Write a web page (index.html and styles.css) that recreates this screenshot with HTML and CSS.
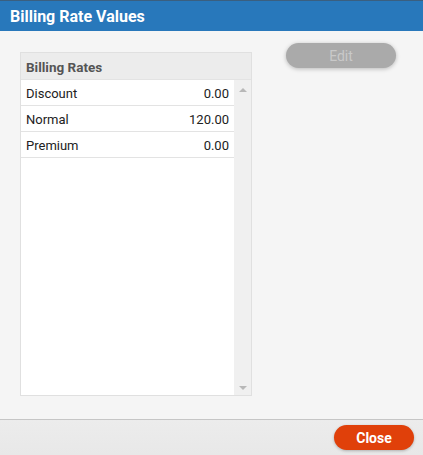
FILE: index.html
```html
<!DOCTYPE html>
<html>
<head>
<meta charset="utf-8">
<link rel="stylesheet" href="styles.css">
</head>
<body>
<div class="dialog">
  <div class="titlebar">Billing Rate Values</div>
  <div class="content">
    <div class="grid">
      <div class="grid-head">Billing Rates</div>
      <div class="grid-body">
        <div class="rows">
          <div class="row"><span>Discount</span><span>0.00</span></div>
          <div class="row"><span>Normal</span><span>120.00</span></div>
          <div class="row"><span>Premium</span><span>0.00</span></div>
        </div>
        <div class="scrollbar">
          <span class="arrow up"></span>
          <span class="arrow down"></span>
        </div>
      </div>
    </div>
    <div class="actions">
      <button class="btn-edit" disabled>Edit</button>
    </div>
  </div>
  <div class="footer">
    <button class="btn-close">Close</button>
  </div>
</div>
</body>
</html>
```
FILE: styles.css
```css
* { box-sizing: border-box; }
html, body { margin: 0; padding: 0; }
body {
  width: 423px;
  height: 455px;
  background: #f5f5f5;
  font-family: Roboto, "Liberation Sans", sans-serif;
  overflow: hidden;
}
.dialog {
  display: flex;
  flex-direction: column;
  height: 455px;
}
.titlebar {
  height: 31px;
  background: #2878bb;
  border-top: 1px solid #3a5f80;
  color: #fff;
  font-weight: 700;
  font-size: 16px;
  padding: 6px 0 0 10px;
}
.content {
  flex: 1;
  display: flex;
  padding: 21px 0 0 20px;
}
.grid {
  width: 232px;
  height: 344px;
  border: 1px solid #e0e0e0;
  display: flex;
  flex-direction: column;
  background: #fff;
}
.grid-head {
  height: 27px;
  background: #ececec;
  border-bottom: 1px solid #e3e3e3;
  color: #555;
  font-weight: 700;
  font-size: 13.5px;
  padding: 6px 0 0 5px;
}
.grid-body {
  flex: 1;
  display: flex;
}
.rows {
  flex: 1;
}
.row {
  height: 26px;
  border-bottom: 1px solid #e3e3e3;
  display: flex;
  justify-content: space-between;
  align-items: center;
  padding: 1px 5px 0 5px;
  font-size: 13px;
  color: #222;
}
.scrollbar {
  width: 17px;
  background: #f0f0f0;
  display: flex;
  flex-direction: column;
  justify-content: space-between;
  align-items: center;
  padding: 8px 0 5px 0;
}
.arrow {
  width: 0;
  height: 0;
  border-left: 4px solid transparent;
  border-right: 4px solid transparent;
}
.arrow.up { border-bottom: 4px solid #b8b8b8; }
.arrow.down { border-top: 4px solid #b8b8b8; }
.actions {
  padding: 0 0 0 34px;
  margin-top: -9px;
}
.btn-edit {
  width: 110px;
  height: 25px;
  border: none;
  border-radius: 13px;
  background: #aaaaaa;
  color: #c9c9c9;
  font-family: Roboto, "Liberation Sans", sans-serif;
  font-size: 14px;
  box-shadow: 0 1px 4px rgba(0,0,0,0.25);
}
.footer {
  height: 36px;
  border-top: 1px solid #c6c6c6;
  background: linear-gradient(#ececec, #e8e8e8);
  display: flex;
  justify-content: flex-end;
  align-items: flex-start;
  padding: 5px 9px 0 0;
}
.btn-close {
  width: 80px;
  height: 25px;
  border: none;
  border-radius: 13px;
  background: #e0400a;
  color: #fff;
  font-family: Roboto, "Liberation Sans", sans-serif;
  font-weight: 700;
  font-size: 14px;
  box-shadow: 0 1px 3px rgba(0,0,0,0.25);
}
```
